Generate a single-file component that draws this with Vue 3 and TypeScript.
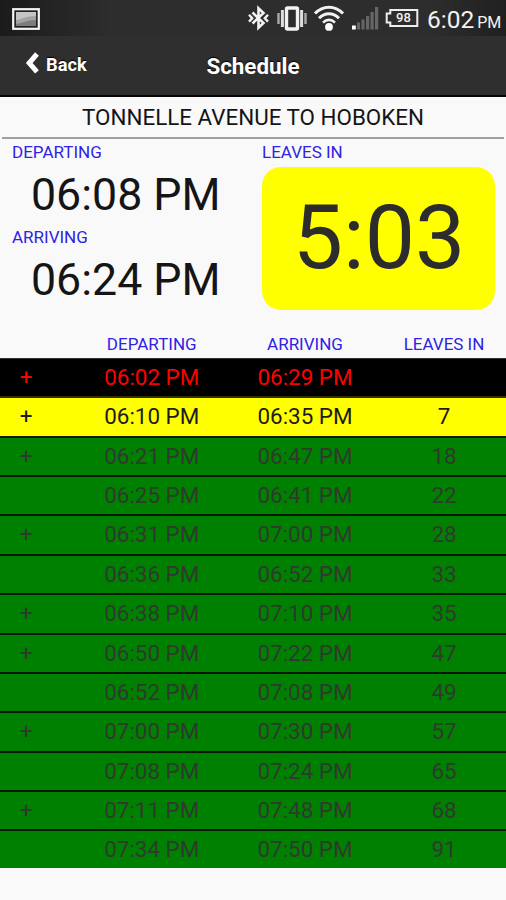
<script setup lang="ts">
interface Trip {
  more: boolean
  departing: string
  arriving: string
  leaves: string
  state: 'missed' | 'next' | 'later'
}

const trip = (
  more: boolean,
  departing: string,
  arriving: string,
  leaves: string,
  state: Trip['state'] = 'later',
): Trip => ({ more, departing, arriving, leaves, state })

const trips: Trip[] = [
  trip(true, '06:02 PM', '06:29 PM', '', 'missed'),
  trip(true, '06:10 PM', '06:35 PM', '7', 'next'),
  trip(true, '06:21 PM', '06:47 PM', '18'),
  trip(false, '06:25 PM', '06:41 PM', '22'),
  trip(true, '06:31 PM', '07:00 PM', '28'),
  trip(false, '06:36 PM', '06:52 PM', '33'),
  trip(true, '06:38 PM', '07:10 PM', '35'),
  trip(true, '06:50 PM', '07:22 PM', '47'),
  trip(false, '06:52 PM', '07:08 PM', '49'),
  trip(true, '07:00 PM', '07:30 PM', '57'),
  trip(false, '07:08 PM', '07:24 PM', '65'),
  trip(true, '07:11 PM', '07:48 PM', '68'),
  trip(false, '07:34 PM', '07:50 PM', '91'),
]
</script>

<template>
  <div class="screen">
    <div class="status">
      <svg class="photo" width="28" height="22" viewBox="0 0 28 22">
        <rect x="1.2" y="1.2" width="25.6" height="19.6" fill="#222" stroke="#f4f4f4" stroke-width="2.2" />
        <rect x="4" y="4" width="20" height="14" fill="#c4c4c4" />
        <path d="M4 12c5 0 8-4 20-4v10H4z" fill="#a2a2a2" />
        <path d="M4 16c7-1 12-4 20-4v6H4z" fill="#7c7c7c" />
      </svg>
      <svg class="icons" width="180" height="36" viewBox="0 0 180 36">
        <g fill="none" stroke="#f2f2f2">
          <path d="M5.500 12.500L16.500 23l-5 4.800V8.200l5 4.800L5.500 23.500" stroke-width="2.6" />
          <path d="M2 14.800l3.200 3.400L2 21.600M21 14.800l-3.200 3.400 3.200 3.400" stroke-width="2.4" />
          <rect x="39.500" y="8" width="11" height="21" rx="1" stroke-width="3.4" />
          <path d="M35.400 10v17M54.600 10v17" stroke-width="3" stroke="#ddd" />
          <path d="M31.500 13v11M58.500 13v11" stroke-width="2.400" stroke="#aaa" />
          <path d="M68 13.500c8-8.500 20-8.500 28 0" stroke-width="3" />
          <path d="M72 18.300c6-6.200 14-6.200 20 0" stroke-width="3" />
          <path d="M76 22.600c3.600-3.600 8.400-3.600 12 0" stroke-width="2.600" />
        </g>
        <circle cx="82" cy="26.900" r="3.900" fill="#fff" />
        <rect x="105" y="25.500" width="3.800" height="4" fill="#fff" />
        <g fill="#666">
          <rect x="110" y="22.500" width="3" height="7" />
          <rect x="114.500" y="19.500" width="3" height="10" />
          <rect x="119" y="16" width="3.200" height="13.500" />
          <rect x="123.500" y="12" width="3.200" height="17.500" />
          <rect x="128" y="7" width="3.200" height="22.500" />
        </g>
        <path d="M143.300 10h27v16h-27v-3.500h-3.600v-9h3.600z" fill="none" stroke="#eee" stroke-width="2" />
      </svg>
      <span class="charge">98</span>
      <span class="clock">6:02<small>PM</small></span>
    </div>

    <header class="nav">
      <div class="back">
        <svg width="16" height="24" viewBox="0 0 16 24">
          <path d="M13 2L5.200 11l7.800 8.800" fill="none" stroke="#fff" stroke-width="5" />
        </svg>
        <span>Back</span>
      </div>
      <h1>Schedule</h1>
      <div></div>
    </header>

    <h2 class="route"><span>TONNELLE AVENUE TO HOBOKEN</span></h2>

    <section class="summary">
      <div class="times">
        <div class="label">DEPARTING</div>
        <div class="time">06:08 PM</div>
        <div class="label">ARRIVING</div>
        <div class="time">06:24 PM</div>
      </div>
      <div class="countdown">
        <div class="label">LEAVES IN</div>
        <div class="box">5:03</div>
      </div>
    </section>

    <div class="grid heads">
      <span></span><span>DEPARTING</span><span>ARRIVING</span><span>LEAVES IN</span>
    </div>
    <div class="trips">
      <div v-for="t in trips" :key="t.departing" class="grid row" :class="t.state">
        <span>{{ t.more ? '+' : '' }}</span>
        <span>{{ t.departing }}</span>
        <span>{{ t.arriving }}</span>
        <span>{{ t.leaves }}</span>
      </div>
    </div>
  </div>
</template>

<style>
body {
  margin: 0;
  background: #f9f9f9;
}
</style>

<style scoped>
.screen {
  width: 506px;
  height: 900px;
  overflow: hidden;
  background: #f9f9f9;
  font-family: Roboto, "Liberation Sans", sans-serif;
  color: #151515;
  white-space: nowrap;
}
.status {
  position: relative;
  display: flex;
  height: 36px;
  background: linear-gradient(90deg, #1b1b1b, #2d2d2d 22%, #2d2d2d 85%, #202020);
  color: #f2f2f2;
}
.photo {
  margin: 8px 0 0 12px;
}
.icons {
  margin-left: 207px;
}
.charge {
  position: absolute;
  left: 396px;
  top: 10px;
  font-size: 13px;
  line-height: 16px;
  font-weight: 500;
}
.clock {
  line-height: 39px;
  font-size: 24.5px;
}
.clock small {
  margin-left: 3px;
  font-size: 16px;
}
.nav {
  display: grid;
  grid-template-columns: 1fr auto 1fr;
  height: 59px;
  border-bottom: 2px solid #050505;
  background: #2f2f2f;
  color: #fff;
  text-shadow: 0 -1px 1px #000;
}
.back {
  display: flex;
  gap: 6px;
  padding: 16px 0 0 24px;
  font-size: 18.3px;
  font-weight: 700;
  line-height: 25px;
}
h1 {
  margin: 0;
  font-size: 22.4px;
  font-weight: 700;
  line-height: 61px;
}
.route {
  margin: 0 2px;
  height: 40px;
  border-bottom: 2px solid #a0a0a0;
  text-align: center;
  font-size: 22.4px;
  font-weight: 400;
  line-height: 41px;
}
.summary {
  display: flex;
  height: 192px;
}
.times {
  width: 250px;
  padding-left: 12px;
}
.label {
  height: 26px;
  font-size: 17px;
  line-height: 26px;
  color: #2f22e4;
}
.time {
  height: 59px;
  padding-left: 19px;
  font-size: 44.7px;
  line-height: 60px;
}
.countdown {
  width: 233px;
}
.box {
  margin-top: 2px;
  height: 143px;
  border-radius: 19px;
  background: #ff0;
  color: #2c2c2c;
  text-align: center;
  font-size: 89.5px;
  line-height: 142px;
  text-indent: 1px;
}
.grid {
  display: grid;
  grid-template-columns: 52px 199.500px 107px 171px;
  text-align: center;
}
.heads {
  height: 27px;
  font-size: 17px;
  line-height: 27px;
  color: #2f22e4;
}
.row {
  box-sizing: border-box;
  height: 39.36px;
  border-bottom: 2px solid #031803;
  font-size: 22.4px;
  line-height: 37px;
}
.trips {
  border-top: 1px solid #333;
}
.missed {
  background: #000;
  border-color: #332f00;
  color: #f00;
}
.next {
  background: #ff0;
  border-color: #151500;
  color: #1c1c1c;
}
.later {
  background: #008000;
  color: #2f3a2f;
}
.row:last-child {
  height: 37px;
  border-bottom: 0;
}
</style>
